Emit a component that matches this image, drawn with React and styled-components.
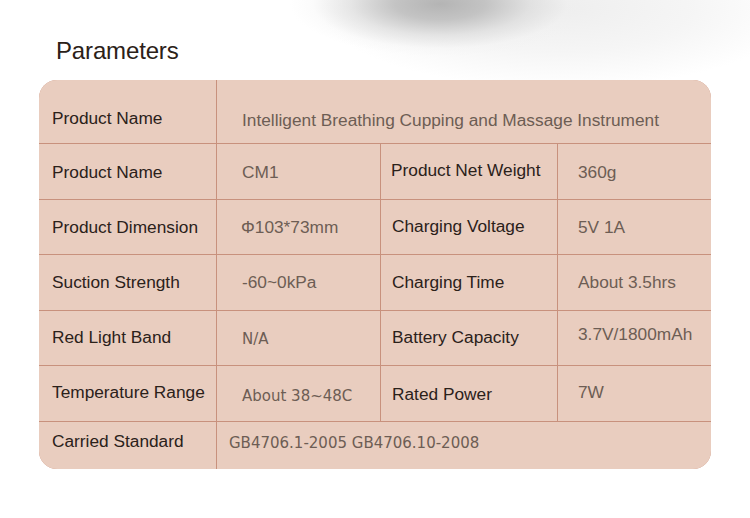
import React from "react";
import styled, { createGlobalStyle } from "styled-components";

const Global = createGlobalStyle`
  html, body { margin: 0; padding: 0; }
  body {
    width: 750px;
    height: 518px;
    overflow: hidden;
    background-color: #ffffff;
    background-image:
      radial-gradient(ellipse 150px 52px at 440px 4px, rgba(180,180,180,1) 0%, rgba(190,190,190,0.9) 30%, rgba(215,215,215,0.6) 60%, rgba(240,240,240,0.25) 85%, rgba(255,255,255,0) 100%),
      radial-gradient(ellipse 240px 80px at 560px 8px, rgba(238,238,238,1) 0%, rgba(243,243,243,0.8) 55%, rgba(255,255,255,0) 100%);
    background-repeat: no-repeat;
    font-family: "Liberation Sans", Arial, sans-serif;
  }
`;

const Page = styled.div`
  display: flex;
  flex-direction: column;
  padding: 39px 39px 0 39px;
`;

const Title = styled.h2`
  margin: 0 0 17px 17px;
  font-family: "Liberation Sans", Arial, sans-serif;
  font-weight: normal;
  font-size: 24px;
  line-height: 24px;
  color: #2b2118;
  letter-spacing: -0.15px;
`;

const Card = styled.div`
  width: 672px;
  display: grid;
  grid-template-columns: 177px 163px 176px 153px;
  grid-template-rows: 63px 55px 54px 55px 54px 55px 47px;
  gap: 1px;
  background: #c8917d;
  border-radius: 18px;
  overflow: hidden;
`;

const Cell = styled.div`
  background: #e9cdbf;
  display: flex;
  align-items: center;
  box-sizing: border-box;
  grid-column: ${(p) => (p.$span ? `span ${p.$span}` : "auto")};
  padding-left: ${(p) => p.$pl}px;
  padding-top: ${(p) => Math.max(0, (p.$dy || 0) * 2)}px;
  padding-bottom: ${(p) => Math.max(0, -(p.$dy || 0) * 2)}px;
  white-space: nowrap;
`;

const Label = styled.span`
  font-family: "Liberation Sans", Arial, sans-serif;
  font-size: 17.3px;
  color: #2b211a;
`;

const Value = styled.span`
  font-family: ${(p) =>
    p.$alt ? `"DejaVu Sans", Verdana, sans-serif` : `"Liberation Sans", Arial, sans-serif`};
  font-size: ${(p) => (p.$alt ? 15 : 17.3)}px;
  color: #6d5d54;
`;

export default function App() {
  return (
    <>
      <Global />
      <Page>
        <Title>Parameters</Title>
        <Card>
          <Cell $pl={13} $dy={6.5}><Label>Product Name</Label></Cell>
          <Cell $pl={25} $dy={9} $span={3}>
            <Value>Intelligent Breathing Cupping and Massage Instrument</Value>
          </Cell>

          <Cell $pl={13} $dy={0.5}><Label>Product Name</Label></Cell>
          <Cell $pl={25} $dy={1}><Value>CM1</Value></Cell>
          <Cell $pl={10} $dy={-1}><Label>Product Net Weight</Label></Cell>
          <Cell $pl={20} $dy={1}><Value>360g</Value></Cell>

          <Cell $pl={13} $dy={0.5}><Label>Product Dimension</Label></Cell>
          <Cell $pl={24} $dy={0.5}><Value>Φ103*73mm</Value></Cell>
          <Cell $pl={11} $dy={-1}><Label>Charging Voltage</Label></Cell>
          <Cell $pl={20} $dy={0.5}><Value>5V 1A</Value></Cell>

          <Cell $pl={13} $dy={0}><Label>Suction Strength</Label></Cell>
          <Cell $pl={25} $dy={0}><Value>-60~0kPa</Value></Cell>
          <Cell $pl={11} $dy={0}><Label>Charging Time</Label></Cell>
          <Cell $pl={20} $dy={0}><Value>About 3.5hrs</Value></Cell>

          <Cell $pl={13} $dy={-1}><Label>Red Light Band</Label></Cell>
          <Cell $pl={25} $dy={1}><Value $alt>N/A</Value></Cell>
          <Cell $pl={11} $dy={-1}><Label>Battery Capacity</Label></Cell>
          <Cell $pl={20} $dy={-4}><Value>3.7V/1800mAh</Value></Cell>

          <Cell $pl={13} $dy={-1}><Label>Temperature Range</Label></Cell>
          <Cell $pl={25} $dy={2}><Value $alt>About 38~48C</Value></Cell>
          <Cell $pl={11} $dy={1}><Label>Rated Power</Label></Cell>
          <Cell $pl={20} $dy={-1.5}><Value>7W</Value></Cell>

          <Cell $pl={13} $dy={-4}><Label>Carried Standard</Label></Cell>
          <Cell $pl={12} $dy={-2.5} $span={3}>
            <Value $alt>GB4706.1-2005 GB4706.10-2008</Value>
          </Cell>
        </Card>
      </Page>
    </>
  );
}
